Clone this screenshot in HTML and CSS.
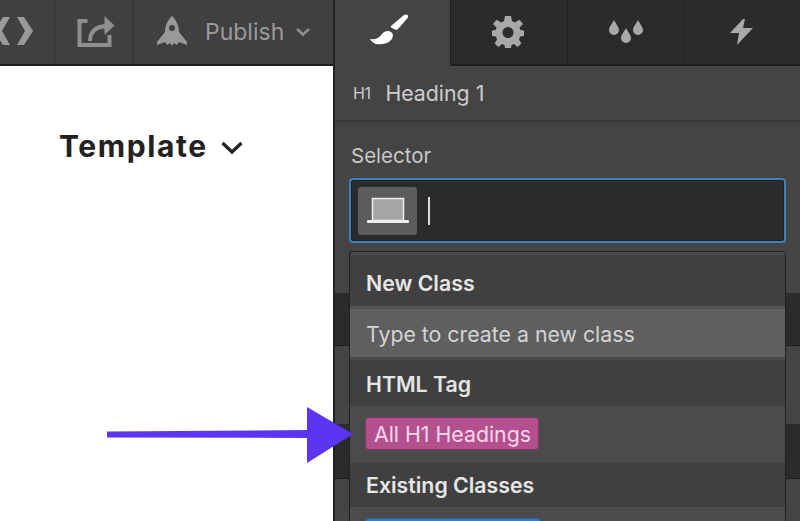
FILE: index.html
```html
<!DOCTYPE html>
<html lang="en">
<head>
  <meta charset="UTF-8" />
  <title>Designer</title>
  <link rel="stylesheet" href="styles.css">
</head>
<body>
  <div class="app">
    <div class="left">
      <div class="toolbar">
        <div class="tool tool-code">
          <svg width="44" height="30" viewBox="0 0 44 30"><path d="M3 0 H10 L2 14 L10 28 H3 L-6 14 Z M17 0 H24 L33 14 L24 28 H17 L25 14 Z" fill="#999"/></svg>
        </div>
        <div class="tool tool-share">
          <svg width="40" height="34" viewBox="0 0 40 34"><path d="M1.5 4 H11.5 V8 H5.5 V28 H31.5 V20 H35.5 V32 H1.5 Z" fill="#8f8f8f"/><path d="M12 26 C12 17 17 10 28.5 9 V1 L38.5 10.5 L28.5 20 V13.5 C21 14 16 18 16 26 Z" fill="#8f8f8f"/></svg>
        </div>
        <div class="tool tool-publish">
          <svg width="34" height="34" viewBox="0 0 34 34"><path fill-rule="evenodd" d="M17 1 C21 5 24 10 24 17 L32 27 L32 30 L24 27 L22 30 L19 28 L17 31 L15 28 L12 30 L10 27 L2 30 L2 27 L10 17 C10 10 13 5 17 1 Z M17 10 A3 3 0 1 0 17 16 A3 3 0 1 0 17 10 Z" fill="#999"/></svg>
          <span class="publish-label">Publish</span>
          <svg width="16" height="10" viewBox="0 0 16 10"><path d="M2 2 L8 7.5 L14 2" fill="none" stroke="#8f8f8f" stroke-width="2.4"/></svg>
        </div>
      </div>
      <div class="canvas">
        <div class="template">
          <span>Template</span>
          <svg width="24" height="16" viewBox="0 0 24 16"><path d="M2.5 3 L12 12 L21.5 3" fill="none" stroke="#222" stroke-width="3.4"/></svg>
        </div>
      </div>
    </div>

    <div class="panel">
      <div class="tabs">
        <div class="tab tab-active">
          <svg width="42" height="34" viewBox="0 0 42 34"><path d="M21 14 L34 3 C36 1.500 39 3 38 5.500 L28 17 C27 18 26 18 25 17.500 L22 16 C21 15.500 20.500 15 21 14 Z" fill="#fff"/><path d="M0 27 C6 28 9 26 12 22 C14 19 19 18 21 20 C24 22 23 26 21 28 C18 32 10 33 6 32 C3 31 1 29 0 27 Z" fill="#fff"/></svg>
        </div>
        <div class="tab">
          <svg class="gear" width="32" height="32" viewBox="0 0 32 32"><path fill-rule="evenodd" d="M13 0 H19 L20 5 L23 6.500 L27.500 3.800 L31 8 L27.500 11.500 L28.500 14 L32 14.500 V20 L28 20.500 L27 23.500 L29.500 27.500 L25.500 31 L22 28 L19.500 29 L19 32 H13 L12.500 29 L10 28 L6.500 31 L2.500 27.500 L5 23.500 L4 20.500 L0 20 V14.500 L3.500 14 L4.500 11.500 L1 8 L4.500 3.800 L9 6.500 L12 5 Z M16 11 A5.500 5.500 0 1 0 16 22 A5.500 5.500 0 1 0 16 11 Z" fill="#a8a8a8"/></svg>
        </div>
        <div class="tab">
          <svg width="36" height="30" viewBox="0 0 36 30"><path d="M6 3 C8 7 11 10 11 13 A5 5 0 0 1 1 13 C1 10 4 7 6 3 Z" fill="#a8a8a8"/><path d="M18 11 C20 15 23 18 23 21 A5 5 0 0 1 13 21 C13 18 16 15 18 11 Z" fill="#a8a8a8"/><path d="M30 3 C32 7 35 10 35 13 A5 5 0 0 1 25 13 C25 10 28 7 30 3 Z" fill="#a8a8a8"/></svg>
        </div>
        <div class="tab">
          <svg width="26" height="28" viewBox="0 0 26 28"><path d="M14 1 L1 15 H10 L8 27 L24 10 H14 L16 1 Z" fill="#a8a8a8"/></svg>
        </div>
      </div>

      <div class="element-row">
        <span class="element-tag">H1</span>
        <span class="element-name">Heading 1</span>
      </div>

      <div class="selector">
        <div class="selector-label">Selector</div>
        <div class="selector-input">
          <div class="device">
            <svg width="42" height="30" viewBox="0 0 42 30"><rect x="5.500" y="2.500" width="31" height="22" fill="#a6a6a6" stroke="#eee" stroke-width="1.500"/><rect x="0" y="24" width="42" height="3" rx="1" fill="#eee"/></svg>
          </div>
          <div class="caret"></div>
        </div>
      </div>

      <div class="stripes">
        <div class="stripe stripe-dark"></div>
        <div class="stripe stripe-light"></div>
        <div class="stripe stripe-dark stripe-second"></div>
      </div>

      <div class="dropdown">
        <div class="drop-head drop-head-first">New Class</div>
        <div class="drop-hint">Type to create a new class</div>
        <div class="drop-head">HTML Tag</div>
        <div class="drop-row"><span class="chip chip-pink">All H1 Headings</span></div>
        <div class="drop-head drop-head-last">Existing Classes</div>
        <div class="drop-row drop-row-last"><span class="chip chip-blue"></span></div>
      </div>
    </div>
  </div>

  <svg class="arrow" width="260" height="70" viewBox="0 0 260 70"><path d="M1 25.500 L201 24 L201 1 L247 28 L201 57 L201 32 L1 31.500 Z" fill="#5b35f0"/></svg>
</body>
</html>
```

FILE: styles.css
```css
html, body {
  margin: 0;
  padding: 0;
  height: 100%;
  overflow: hidden;
}
body {
  font-family: Inter, "Liberation Sans", sans-serif;
  background: #444;
  position: relative;
}
.app {
  display: flex;
  width: 800px;
  height: 521px;
  overflow: hidden;
}
.left {
  width: 333px;
  display: flex;
  flex-direction: column;
}
.toolbar {
  height: 64px;
  display: flex;
  background: #404040;
  border-bottom: 2px solid #1d1d1d;
  overflow: hidden;
}
.tool {
  display: flex;
  align-items: center;
  border-right: 1px solid #333;
}
.tool-code {
  width: 55px;
  flex: none;
  box-sizing: border-box;
}
.tool-share {
  width: 79px;
  flex: none;
  box-sizing: border-box;
  justify-content: center;
  padding-left: 3px;
}
.tool-publish {
  flex: 1;
  padding-left: 21px;
  border-right: none;
}
.publish-label {
  font-size: 23px;
  color: #9a9a9a;
  margin-left: 16px;
  margin-right: 11px;
}
.canvas {
  flex: 1;
  background: #fff;
  padding: 61px 0 0 59px;
}
.template {
  display: flex;
  align-items: center;
  gap: 12px;
  font-size: 30px;
  font-weight: 700;
  letter-spacing: 1.600px;
  line-height: 38px;
  color: #222;
}
.template svg {
  margin-top: 4px;
}

.panel {
  flex: 1;
  position: relative;
  background: #444;
  border-left: 2px solid #222;
}
.tabs {
  display: flex;
  height: 66px;
}
.tab {
  flex: 1;
  display: flex;
  align-items: center;
  justify-content: center;
  background: #2b2b2b;
  border-left: 1px solid #222;
  border-bottom: 2px solid #1d1d1d;
  box-sizing: border-box;
}
.tab-active {
  flex: none;
  width: 115px;
  background: #444;
  border: none;
  padding: 0 4px 8px 0;
}
.gear {
  margin-right: 2px;
}
.element-row {
  height: 54px;
  display: flex;
  align-items: center;
  padding-left: 18px;
  gap: 15px;
  color: #ccc;
  border-bottom: 2px solid #383838;
}
.element-tag {
  font-size: 16px;
  letter-spacing: -0.5px;
}
.element-name {
  font-size: 21.300px;
}
.selector {
  padding: 22px 14px 0 14px;
}
.selector-label {
  font-size: 20.500px;
  line-height: 24px;
  color: #c8c8c8;
  margin: 0 0 10px 2px;
}
.selector-input {
  height: 61px;
  display: flex;
  align-items: center;
  gap: 11px;
  padding-left: 7px;
  background: #2b2b2b;
  border: 2px solid #3f7fbf;
  border-radius: 4px;
  box-shadow: inset 0 0 0 1px #1f1f1f;
}
.device {
  width: 59px;
  height: 48px;
  display: flex;
  align-items: center;
  justify-content: center;
  background: #5c5c5c;
  border-radius: 3px;
}
.caret {
  width: 1.500px;
  height: 28px;
  background: #ddd;
}
.stripes {
  position: absolute;
  top: 293px;
  left: 0;
  right: 0;
}
.stripe-dark {
  height: 52px;
  background: #2b2b2b;
  border-bottom: 1px solid #1d1d1d;
}
.stripe-light {
  height: 78px;
}
.stripe-second {
  height: 54px;
}
.dropdown {
  position: absolute;
  top: 251px;
  left: 14px;
  width: 435px;
  background: #404040;
  border: 1px solid #222;
  border-radius: 4px 4px 0 0;
  border-bottom: none;
  color: #eee;
}
.drop-head {
  height: 49px;
  line-height: 49px;
  padding-left: 16px;
  font-size: 21.300px;
  font-weight: 600;
  color: #e6e6e6;
  background: #404040;
  box-sizing: border-box;
  border-top: 3px solid #4a4a4a;
}
.drop-head-first {
  height: 54px;
  line-height: 56px;
  border-radius: 4px 4px 0 0;
}
.drop-head-last {
  height: 47px;
  line-height: 44px;
}
.drop-hint {
  height: 51px;
  line-height: 50px;
  padding-left: 16px;
  font-size: 21.300px;
  color: #d4d4d4;
  background: #5f5f5f;
  box-sizing: border-box;
  border-top: 3px solid #545454;
}
.drop-row {
  height: 54px;
  background: #4b4b4b;
  display: flex;
  align-items: center;
  padding-left: 15px;
}
.drop-row-last {
  height: 14px;
  align-items: flex-start;
  padding-top: 11px;
  box-sizing: border-box;
  overflow: hidden;
}
.chip {
  display: block;
  box-sizing: border-box;
  height: 33px;
  line-height: 32px;
  padding: 0 8px;
  font-size: 21.300px;
  border-radius: 4px;
  border: 1px solid #7a3a66;
  white-space: nowrap;
}
.chip-pink {
  width: 174px;
  background: #b5508f;
  color: #f7d8ec;
}
.chip-blue {
  flex: none;
  width: 176px;
  background: #3f78bd;
  border-color: #2f5f9a;
}
.arrow {
  position: absolute;
  left: 106px;
  top: 406px;
}
```
